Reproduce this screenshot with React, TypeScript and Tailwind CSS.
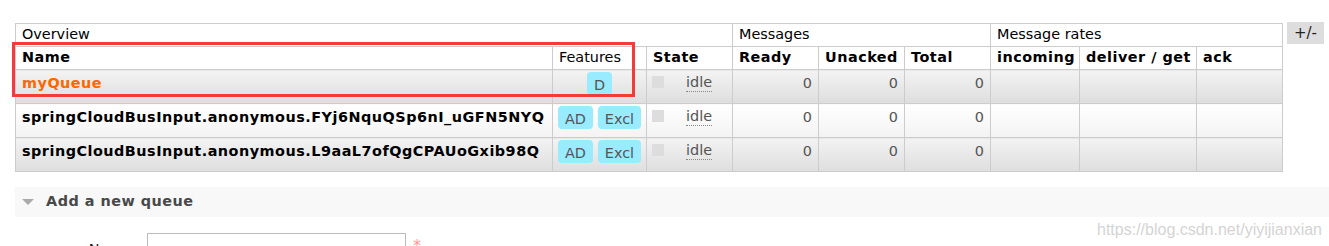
import React from "react";

type Queue = {
  name: string;
  features: string[];
  alt: boolean;
  link?: boolean;
};

const queues: Queue[] = [
  { name: "myQueue", features: ["D"], alt: true, link: true },
  {
    name: "springCloudBusInput.anonymous.FYj6NquQSp6nI_uGFN5NYQ",
    features: ["AD", "Excl"],
    alt: false,
  },
  {
    name: "springCloudBusInput.anonymous.L9aaL7ofQgCPAUoGxib98Q",
    features: ["AD", "Excl"],
    alt: true,
  },
];

const th = "border border-[#ccc] px-[6px] text-left align-middle whitespace-nowrap";
const bold = "font-bold tracking-[0.5px]";

function QueueRow({ q }: { q: Queue }) {
  const bg = q.alt
    ? "bg-linear-to-b from-[#f3f3f3] to-[#dedede]"
    : "bg-linear-to-b from-[#ffffff] to-[#f3f3f3]";
  const td = `border border-[#ccc] align-top whitespace-nowrap ${bg}`;

  return (
    <tr className="h-[34px]">
      <td className={`${td} px-[6px] pt-[3px] ${bold}`}>
        <span className={q.link ? "text-[#f60]" : "text-black"}>{q.name}</span>
      </td>
      <td className={`${td} pt-[2px] text-center`}>
        <div className="flex justify-center gap-[5px]">
          {q.features.map((f) => (
            <span
              key={f}
              className="inline-block h-[23px] rounded-[4px] bg-[#99ebff] px-[7px] leading-[26px] text-[#555]"
            >
              {f}
            </span>
          ))}
        </div>
      </td>
      <td className={`${td} pt-[3px] pl-[5px]`}>
        <div className="flex items-start">
          <span className="mt-[3px] h-[12px] w-[12px] bg-[#ddd]" />
          <span className="ml-[22px] border-b border-dotted border-[#888] leading-[18px] text-[#555]">
            idle
          </span>
        </div>
      </td>
      <td className={`${td} pt-[3px] pr-[6px] text-right text-[#555]`}>0</td>
      <td className={`${td} pt-[3px] pr-[6px] text-right text-[#555]`}>0</td>
      <td className={`${td} pt-[3px] pr-[6px] text-right text-[#555]`}>0</td>
      <td className={td} />
      <td className={td} />
      <td className={td} />
    </tr>
  );
}

export default function App() {
  return (
    <div className="relative h-[246px] w-[1329px] overflow-hidden bg-white font-['DejaVu_Sans',sans-serif] text-[14.4px] text-black">
      <div className="flex items-start pl-[15px] pt-[23px]">
        <table className="w-[1267px] table-fixed border-collapse">
          <colgroup>
            <col className="w-[537px]" />
            <col className="w-[94px]" />
            <col className="w-[86px]" />
            <col className="w-[86px]" />
            <col className="w-[86px]" />
            <col className="w-[86px]" />
            <col className="w-[89px]" />
            <col className="w-[117px]" />
            <col className="w-[86px]" />
          </colgroup>
          <thead>
            <tr className="h-[23px] bg-white">
              <th colSpan={3} className={`${th} font-normal`}>
                Overview
              </th>
              <th colSpan={3} className={`${th} font-normal`}>
                Messages
              </th>
              <th colSpan={3} className={`${th} font-normal`}>
                Message rates
              </th>
            </tr>
            <tr className="h-[23px] bg-white">
              <th className={`${th} ${bold}`}>Name</th>
              <th className={`${th} font-normal`}>Features</th>
              <th className={`${th} ${bold}`}>State</th>
              <th className={`${th} ${bold}`}>Ready</th>
              <th className={`${th} ${bold}`}>Unacked</th>
              <th className={`${th} ${bold}`}>Total</th>
              <th className={`${th} ${bold}`}>incoming</th>
              <th className={`${th} ${bold}`}>deliver / get</th>
              <th className={`${th} ${bold}`}>ack</th>
            </tr>
          </thead>
          <tbody>
            {queues.map((q) => (
              <QueueRow key={q.name} q={q} />
            ))}
          </tbody>
        </table>
        <button className="-mt-[1px] ml-[4px] h-[22px] w-[37px] bg-[#ddd] text-[15px] text-[#222]">
          +/-
        </button>
      </div>

      <div className="ml-[15px] mt-[15px] flex h-[30px] items-center bg-[#f8f8f8]">
        <span className="ml-[7px] h-0 w-0 border-x-[6px] border-t-[6px] border-x-transparent border-t-[#aaa]" />
        <span className={`ml-[12px] text-[#484848] ${bold}`}>Add a new queue</span>
      </div>

      <div className="mt-[16px] flex items-start">
        <label className="mt-[6px] w-[136px] text-right text-[#222]">Name:</label>
        <div className="ml-[11px] h-[26px] w-[259px] border border-[#bbb] bg-white" />
        <span className="ml-[7px] mt-[1px] text-[16px] text-[#f99]">*</span>
      </div>

      <div className="pointer-events-none absolute left-[12px] top-[42px] h-[55px] w-[623px] border-[3px] border-[#f33b3b]" />
      <div className="pointer-events-none absolute left-[1097px] top-[218px] font-['Liberation_Sans',sans-serif] text-[16px] text-[#d4d4d4]">
        https://blog.csdn.net/yiyijianxian
      </div>
    </div>
  );
}
